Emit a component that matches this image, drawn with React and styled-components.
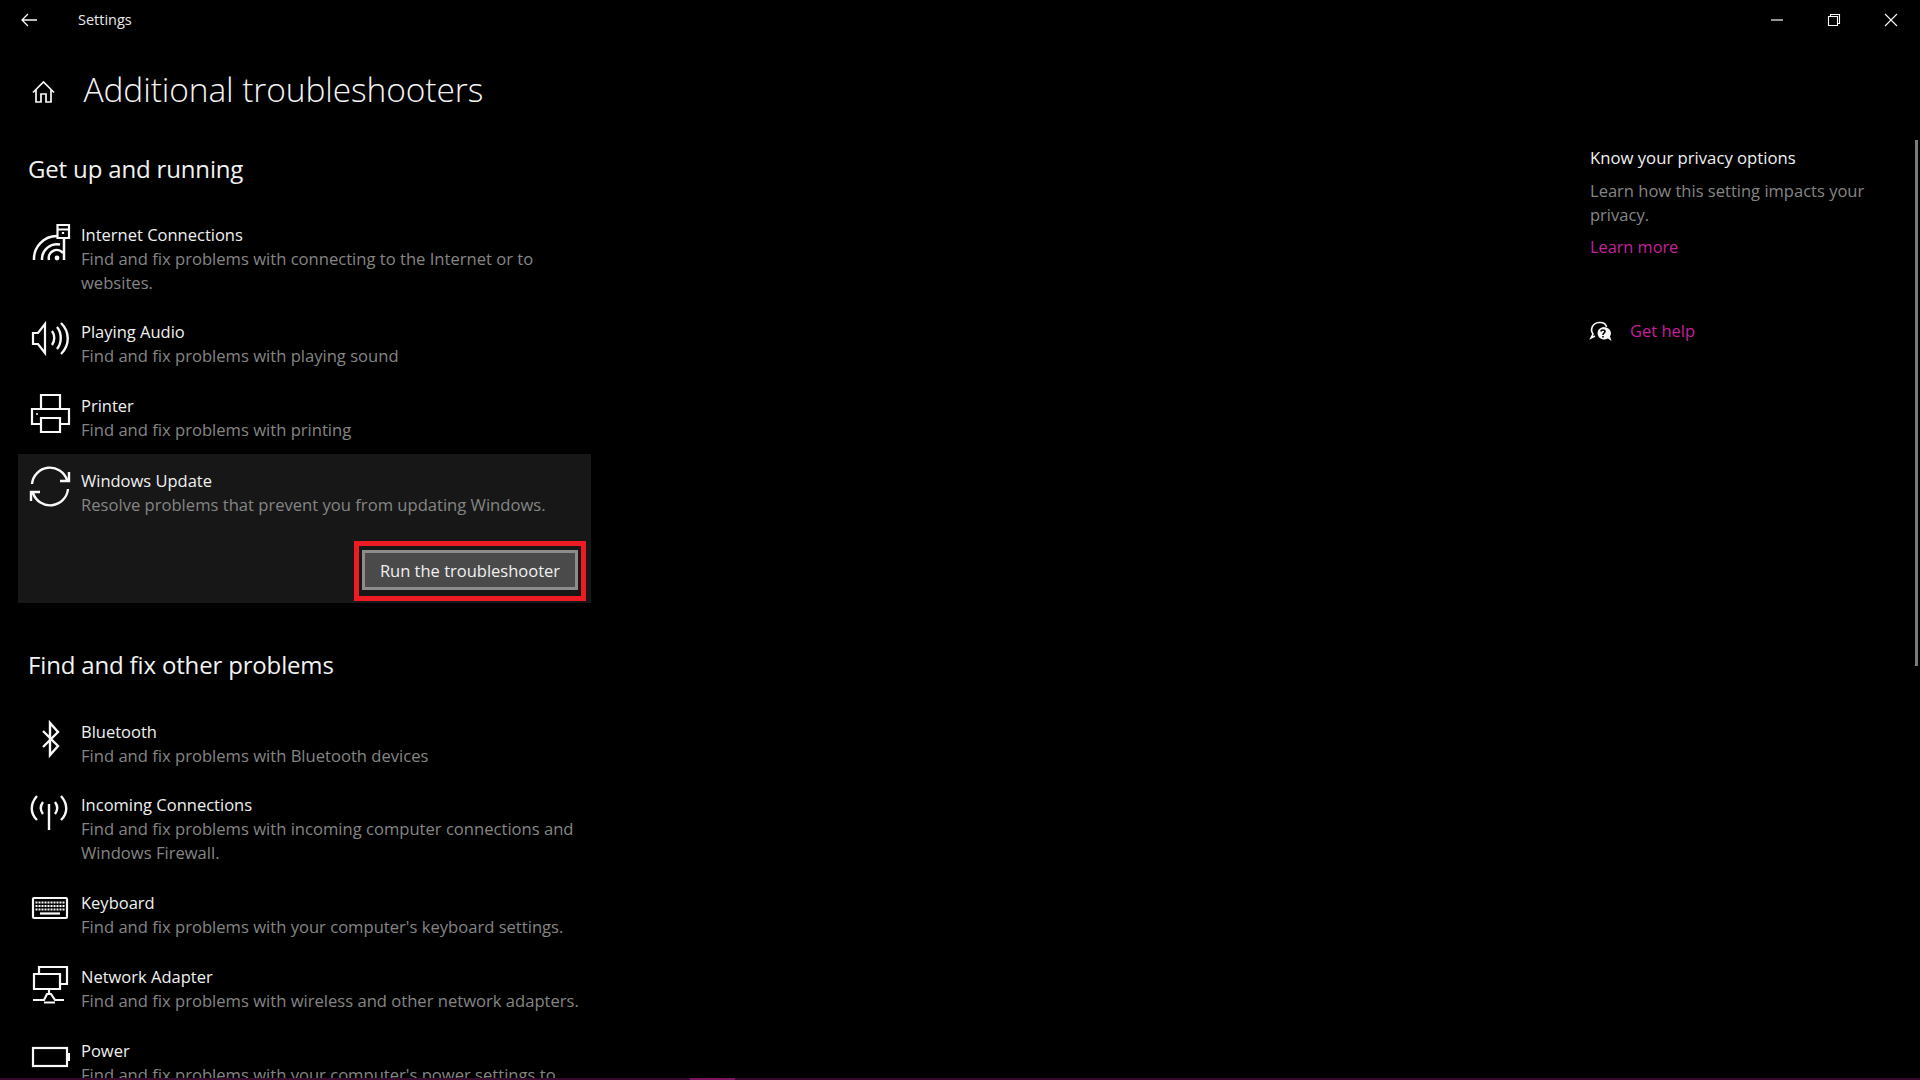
import React from "react";
import styled, { createGlobalStyle } from "styled-components";

const Global = createGlobalStyle`
  html, body { margin: 0; padding: 0; background: #000; }
  body { font-family: "Open Sans", "Noto Sans", sans-serif; color: #fff; }
  * { box-sizing: border-box; }
`;

const Page = styled.div`
  position: relative;
  width: 1920px;
  height: 1080px;
  display: flex;
  flex-direction: column;
  overflow: hidden;
  background: #000;
`;

const TitleBar = styled.header`
  flex: none;
  height: 40px;
  display: flex;
  align-items: center;
`;

const BackButton = styled.div`
  width: 78px;
  height: 40px;
  padding-left: 21px;
  display: flex;
  align-items: center;
`;

const AppName = styled.span`
  font-size: 14.5px;
  line-height: 40px;
  color: #e8e8e8;
`;

const WindowControls = styled.div`
  margin-left: auto;
  padding-right: 1px;
  display: flex;
`;

const WindowButton = styled.div`
  width: 57px;
  height: 40px;
  display: flex;
  align-items: center;
  justify-content: center;
`;

const Body = styled.div`
  flex: 1;
  min-height: 0;
  display: flex;
  overflow: hidden;
`;

const Main = styled.main`
  width: 573px;
  margin-left: 18px;
`;

const PageHeading = styled.div`
  margin-top: 24px;
  height: 50px;
  padding-left: 14px;
  display: flex;
  align-items: center;
`;

const HomeWrap = styled.div`
  width: 51.5px;
  display: flex;
  padding-top: 5px;
`;

const H1 = styled.h1`
  margin: 0;
  font-size: 33.5px;
  font-weight: 300;
  line-height: 50px;
  letter-spacing: -0.1px;
  color: #f4f4f4;
`;

const SectionTitle = styled.h2`
  margin: ${(p) => p.$top}px 0 ${(p) => p.$bottom}px 10px;
  font-size: 24px;
  font-weight: 400;
  line-height: 34px;
  letter-spacing: -0.16px;
  color: #f2f2f2;
`;

const RowList = styled.div`
  display: flex;
  flex-direction: column;
  gap: ${(p) => p.$gap}px;
`;

const Row = styled.div`
  display: grid;
  grid-template-columns: 40px 1fr;
  column-gap: 11px;
  padding-left: 12px;
`;

const RowText = styled.div`
  display: flex;
  flex-direction: column;
  max-width: ${(p) => p.$max || 510}px;
`;

const RowTitle = styled.div`
  font-size: 16.5px;
  line-height: 24px;
  color: #f0f0f0;
`;

const RowDesc = styled.div`
  font-size: 16.6px;
  line-height: 24px;
  color: #858585;
`;

const Panel = styled.section`
  margin-top: 12px;
  height: 149px;
  padding-top: 15px;
  background: #171717;
`;

const PanelActions = styled.div`
  margin-top: 24px;
  padding-right: 5px;
  display: flex;
  justify-content: flex-end;
`;

const Callout = styled.div`
  width: 232px;
  height: 60px;
  padding: 4px 3px 6px;
  border: 5px solid #ed1c24;
`;

const RunButton = styled.button`
  width: 100%;
  height: 100%;
  padding: 2px 0 0;
  background: #4a4a4a;
  border: 3px solid #8c8c8c;
  color: #f0f0f0;
  font: 400 16.5px "Open Sans", "Noto Sans", sans-serif;
`;

const Aside = styled.aside`
  margin-left: auto;
  margin-right: 30px;
  width: 300px;
  padding-top: 106px;
`;

const AsideTitle = styled.div`
  font-size: 16.7px;
  line-height: 24px;
  color: #f0f0f0;
`;

const AsideText = styled.div`
  margin-top: 9px;
  font-size: 16.55px;
  line-height: 24px;
  color: #858585;
`;

const Link = styled.a`
  display: block;
  font-size: 16.5px;
  line-height: 24px;
  color: #c4219b;
`;

const LearnLink = styled(Link)`
  margin-top: 8px;
  font-size: 16.3px;
`;

const HelpRow = styled.div`
  margin-top: 60px;
  display: flex;
  align-items: center;
  gap: 18px;
`;

const HorizontalBar = styled.div`
  flex: none;
  height: 2px;
  display: flex;
  background: #35082c;
`;

const BarThumb = styled.div`
  margin-left: 690px;
  width: 45px;
  background: #7c1560;
`;

const VerticalThumb = styled.div`
  position: absolute;
  top: 140px;
  left: 1915px;
  width: 3px;
  height: 526px;
  background: #7a7a7a;
`;

const Svg = styled.svg`
  display: block;
  overflow: visible;
  fill: none;
  stroke: #f8f8f8;
  stroke-width: 2.2;
`;

const Solid = styled.path`
  fill: #f8f8f8;
  stroke: none;
`;

const icons = {
  internet: (
    <>
      <circle cx="27" cy="35" r="2.4" fill="#f8f8f8" stroke="none" />
      <path strokeWidth="2.5" d="M4 37A23 23 0 0 1 27 13M12 37A15 15 0 0 1 30 21.5M19 37A8 8 0 0 1 33 30M34 15V37" />
      <path d="M27.500 2H39V15H27.500ZM27.500 6.500H39" />
      <path d="M33 9V11" />
    </>
  ),
  audio: (
    <>
      <path d="M3 13H8L15 4V33L8 24H3Z" />
      <path strokeWidth="2.4" d="M22 11C25 15 25 21 22 25M27 7C32 13 32 23 27 29M31 3C40 12 40 25 31 34" />
    </>
  ),
  printer: (
    <>
      <path d="M11 15V1H30V15M11 30H2V15H39V30H30" />
      <path d="M11 24H30V38H11Z" />
      <circle cx="7" cy="20" r="1" fill="#f8f8f8" stroke="none" />
    </>
  ),
  update: (
    <path strokeWidth="2.4" d="M2 15A18 18 0 0 1 37 11M39 3V12H30M38 20A18 18 0 0 1 3 24M1 32V23H10" />
  ),
  bluetooth: <path strokeWidth="2.4" d="M13 11L28 26L20 35V3L28 12L13 27" />,
  incoming: (
    <path strokeWidth="2.4" d="M19 11V37M7 3C0 11 0 20 7 27M13 9C10 13 10 17 13 21M31 3C38 11 38 20 31 27M25 9C28 13 28 17 25 21" />
  ),
  keyboard: (
    <>
      <rect x="3" y="7" width="34" height="20" rx="1" />
      <path strokeDasharray="2 1" d="M5.500 11.500H35M5.500 15H35M5.500 18.500H35" />
      <path d="M10 22.500H30" />
    </>
  ),
  network: (
    <>
      <path d="M4 9H30V24H4Z" />
      <path d="M9 9V2H37V19H30" />
      <path d="M19 24V28M3 35H14L17 29H21L25 35H34M14 37.500H25" />
    </>
  ),
  power: (
    <>
      <rect x="3" y="9" width="34" height="18" />
      <Solid d="M37 14H40V22H37Z" />
    </>
  ),
};

const RowItem = ({ icon, title, max, children }) => (
  <Row>
    <Svg width="40" height="40" viewBox="0 0 40 40">
      {icons[icon]}
    </Svg>
    <RowText $max={max}>
      <RowTitle>{title}</RowTitle>
      <RowDesc>{children}</RowDesc>
    </RowText>
  </Row>
);

export default function App() {
  return (
    <Page>
      <Global />
      <TitleBar>
        <BackButton>
          <Svg width="17" height="14" viewBox="0 0 17 14" style={{ strokeWidth: 1.3 }}>
            <path d="M1 7H16M7 1L1 7L7 13" />
          </Svg>
        </BackButton>
        <AppName>Settings</AppName>
        <WindowControls>
          <WindowButton>
            <Svg width="12" height="2" viewBox="0 0 12 2" style={{ strokeWidth: 1.2 }}>
              <path d="M0 1H12" />
            </Svg>
          </WindowButton>
          <WindowButton>
            <Svg width="12" height="12" viewBox="0 0 12 12" style={{ strokeWidth: 1.1 }}>
              <path d="M.5 2.500H9.500V11.500H.5ZM2.500 2.500V.5H11.500V9.500H9.500" />
            </Svg>
          </WindowButton>
          <WindowButton>
            <Svg width="12" height="12" viewBox="0 0 12 12" style={{ strokeWidth: 1.1 }}>
              <path d="M0 0L12 12M12 0L0 12" />
            </Svg>
          </WindowButton>
        </WindowControls>
      </TitleBar>
      <Body>
        <Main>
          <PageHeading>
            <HomeWrap>
              <Svg width="23" height="22" viewBox="0 0 23 22" style={{ strokeWidth: 1.7 }}>
                <path d="M1 11.500L11.500 1L22 11.500M4 9V21H9V13H14V21H19V9" />
              </Svg>
            </HomeWrap>
            <H1>Additional troubleshooters</H1>
          </PageHeading>
          <SectionTitle $top={38} $bottom={37}>Get up and running</SectionTitle>
          <RowList $gap={25.4}>
            <RowItem icon="internet" title="Internet Connections" max={480}>
              Find and fix problems with connecting to the Internet or to websites.
            </RowItem>
            <RowItem icon="audio" title="Playing Audio">
              Find and fix problems with playing sound
            </RowItem>
            <RowItem icon="printer" title="Printer">
              Find and fix problems with printing
            </RowItem>
          </RowList>
          <Panel>
            <RowItem icon="update" title="Windows Update">
              Resolve problems that prevent you from updating Windows.
            </RowItem>
            <PanelActions>
              <Callout>
                <RunButton>Run the troubleshooter</RunButton>
              </Callout>
            </PanelActions>
          </Panel>
          <SectionTitle $top={45} $bottom={38}>Find and fix other problems</SectionTitle>
          <RowList $gap={25.7}>
            <RowItem icon="bluetooth" title="Bluetooth">
              Find and fix problems with Bluetooth devices
            </RowItem>
            <RowItem icon="incoming" title="Incoming Connections">
              Find and fix problems with incoming computer connections and Windows Firewall.
            </RowItem>
            <RowItem icon="keyboard" title="Keyboard">
              Find and fix problems with your computer's keyboard settings.
            </RowItem>
            <RowItem icon="network" title="Network Adapter">
              Find and fix problems with wireless and other network adapters.
            </RowItem>
            <RowItem icon="power" title="Power">
              Find and fix problems with your computer's power settings to
            </RowItem>
          </RowList>
        </Main>
        <Aside>
          <AsideTitle>Know your privacy options</AsideTitle>
          <AsideText>Learn how this setting impacts your privacy.</AsideText>
          <LearnLink>Learn more</LearnLink>
          <HelpRow>
            <Svg width="22" height="20" viewBox="0 0 22 20" style={{ strokeWidth: 1.6 }}>
              <path d="M5 15L1 17L3 13C0 9 2 2 9 1.500C13 1.200 16 3 16.500 6" />
              <Solid d="M13 6A7.500 6.500 0 0 0 13 18.500C15 18.500 17 18 18 17.500L21.500 20L20 15.500C23 11 19 6 13 6Z" />
              <path stroke="#000" d="M11 10.500C11 8.500 15 8.500 15 10.500C15 12 13 12 13 14M13 15V16.500" />
            </Svg>
            <Link>Get help</Link>
          </HelpRow>
        </Aside>
      </Body>
      <HorizontalBar>
        <BarThumb />
      </HorizontalBar>
      <VerticalThumb />
    </Page>
  );
}
